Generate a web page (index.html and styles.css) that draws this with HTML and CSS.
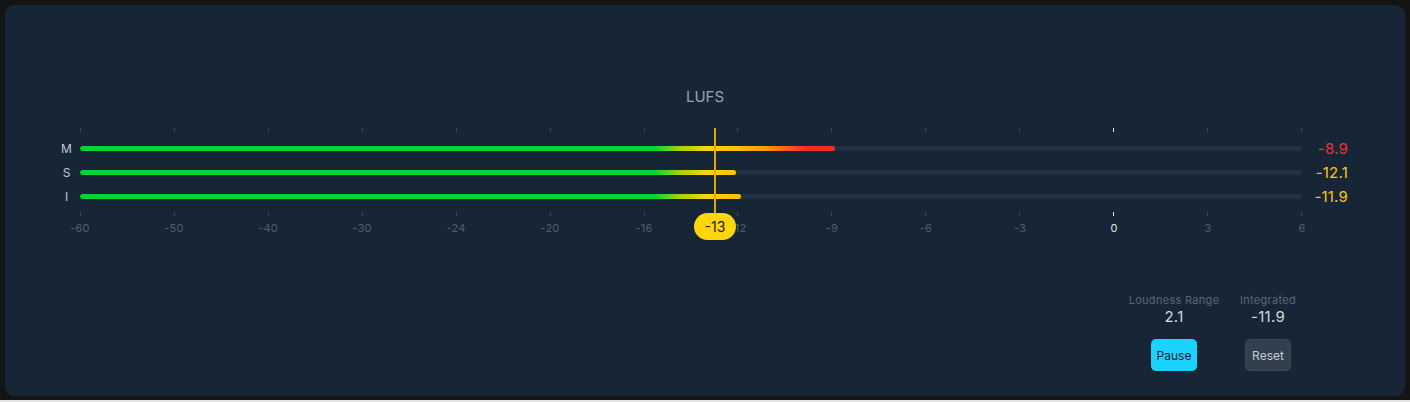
FILE: index.html
```html
<!DOCTYPE html>
<html lang="en">

<head>
  <meta charset="UTF-8">
  <title>Loudness Meter</title>
  <meta name="viewport" content="width=device-width, initial-scale=1">
  <link rel="stylesheet" href="styles.css">
</head>

<body>

  <div class="frame">
    <section class="panel">

      <!-- Title -->
      <div class="title">LUFS</div>

      <!-- Meter -->
      <div class="meter">
        <div class="ticks">
          <i></i><i></i><i></i><i></i><i></i><i></i><i></i>
          <i></i><i></i><i></i><i></i><i class="zero"></i><i></i><i></i>
        </div>

        <div class="row">
          <span class="ch">M</span>
          <div class="track"><div class="fill" style="width: 61.8%"></div></div>
          <span class="val red">-8.9</span>
        </div>
        <div class="row">
          <span class="ch">S</span>
          <div class="track"><div class="fill" style="width: 53.7%"></div></div>
          <span class="val yellow">-12.1</span>
        </div>
        <div class="row">
          <span class="ch">I</span>
          <div class="track"><div class="fill" style="width: 54.1%"></div></div>
          <span class="val yellow">-11.9</span>
        </div>

        <div class="ticks bottom">
          <i></i><i></i><i></i><i></i><i></i><i></i><i></i>
          <i></i><i></i><i></i><i></i><i class="zero"></i><i></i><i></i>
        </div>

        <div class="scale">
          <span>-60</span><span>-50</span><span>-40</span><span>-30</span>
          <span>-24</span><span>-20</span><span>-16</span><span>-12</span>
          <span>-9</span><span>-6</span><span>-3</span><span class="zero">0</span>
          <span>3</span><span>6</span>
        </div>

        <!-- Target marker -->
        <div class="target">
          <div class="target-line"></div>
          <div class="target-badge">-13</div>
        </div>
      </div>

      <!-- Stats -->
      <div class="stats">
        <div class="stat">
          <div class="stat-label">Loudness Range</div>
          <div class="stat-value">2.1</div>
          <button class="btn btn-pause">Pause</button>
        </div>
        <div class="stat">
          <div class="stat-label">Integrated</div>
          <div class="stat-value">-11.9</div>
          <button class="btn btn-reset">Reset</button>
        </div>
      </div>

    </section>
  </div>

</body>

</html>
```

FILE: styles.css
```css
/* Basic Reset */
* {
  margin: 0;
  padding: 0;
  box-sizing: border-box;
}

body {
  font-family: Inter, "Liberation Sans", Arial, sans-serif;
  background-color: #e4e4e4;
}

.frame {
  width: 1410px;
  height: 400px;
  padding: 5px 5px 4px;
  background-color: #141414;
}

/* Panel */
.panel {
  height: 391px;
  background-color: #172636;
  border-radius: 9px;
  padding-top: 83px;
  display: flex;
  flex-direction: column;
}

.title {
  text-align: center;
  font-size: 15px;
  line-height: 18px;
  color: #9aa3ad;
}

/* Meter */
.meter {
  position: relative;
  margin-top: 22px;
}

.ticks {
  margin-left: 75px;
  width: 1222px;
  height: 4px;
  display: flex;
  justify-content: space-between;
  margin-bottom: 4px;
}

.ticks i {
  width: 1px;
  height: 4px;
  background-color: #3a4857;
}

.ticks i.zero {
  background-color: #e6ebf0;
}

.ticks.bottom {
  margin-top: 4px;
  margin-bottom: 5px;
}

.row {
  display: flex;
  align-items: center;
  height: 24px;
}

.ch {
  width: 75px;
  padding-left: 48px;
  text-align: center;
  font-size: 12px;
  color: #c3cad2;
}

.track {
  width: 1222px;
  height: 5px;
  border-radius: 3px;
  background-color: #223041;
  overflow: hidden;
}

.fill {
  height: 100%;
  border-radius: 3px;
  background-image: linear-gradient(to right,
      #00d63c 0%,
      #00d63c 47%,
      #a2d20e 49%,
      #ffd400 51.5%,
      #ffbf00 54%,
      #ff9c00 56%,
      #ff5a20 58%,
      #f52a2d 59.5%,
      #f52a2d 100%);
  background-size: 1222px 100%;
}

.val {
  width: 46px;
  text-align: right;
  font-size: 15px;
  letter-spacing: 0.2px;
}

.val.red {
  color: #f52d32;
}

.val.yellow {
  color: #f7c90a;
}

.scale {
  margin-left: 75px;
  width: 1222px;
  height: 14px;
  display: flex;
  justify-content: space-between;
}

.scale span {
  width: 0;
  display: flex;
  justify-content: center;
  white-space: nowrap;
  font-size: 11px;
  line-height: 14px;
  letter-spacing: 0.2px;
  color: #4f5e6e;
}

.scale span.zero {
  color: #dfe5ea;
}

/* Target marker */
.target {
  position: absolute;
  top: 0;
  left: 709px;
}

.target-line {
  width: 2px;
  height: 88px;
  background-color: #d8aa00;
}

.target-badge {
  position: absolute;
  top: 85px;
  left: -20px;
  width: 42px;
  height: 27px;
  border-radius: 14px;
  background-color: #ffd60a;
  color: #1b1b1b;
  font-size: 14px;
  line-height: 27px;
  text-align: center;
}

/* Stats */
.stats {
  margin-top: 58px;
  align-self: flex-end;
  margin-right: 90px;
  display: grid;
  grid-template-columns: 94px 94px;
}

.stat {
  display: flex;
  flex-direction: column;
  align-items: center;
}

.stat-label {
  font-size: 11px;
  line-height: 14px;
  letter-spacing: 0.3px;
  color: #58677a;
}

.stat-value {
  margin-top: 2px;
  font-size: 15px;
  line-height: 16px;
  letter-spacing: 0.3px;
  color: #d3d9de;
}

.btn {
  margin-top: 14px;
  width: 46px;
  height: 32px;
  border: none;
  border-radius: 5px;
  font-family: inherit;
  font-size: 12px;
  cursor: pointer;
}

.btn-pause {
  background-color: #19d2fe;
  color: #0f2230;
}

.btn-reset {
  background-color: #323f4c;
  border: 1px solid #3a4754;
  color: #c4cbd2;
}
```
